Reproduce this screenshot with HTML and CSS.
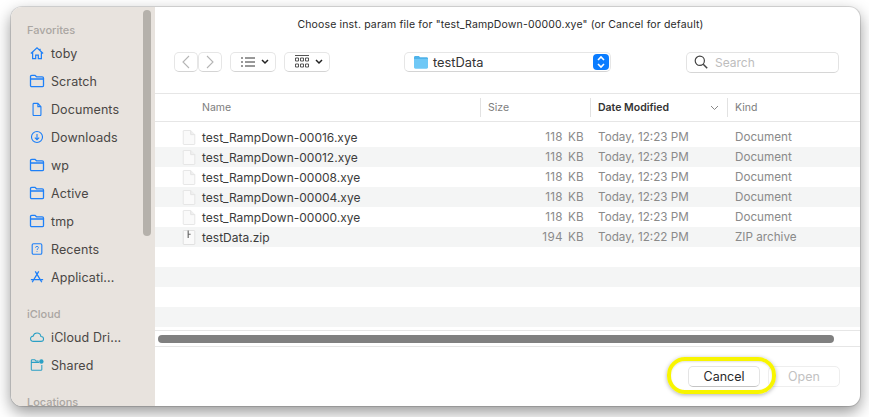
FILE: index.html
```html
<!DOCTYPE html>
<html lang="en">
<head>
  <meta charset="UTF-8" />
  <title>Choose inst. param file</title>
  <link rel="stylesheet" href="styles.css">
</head>
<body>
  <svg class="defs" width="0" height="0">
    <symbol id="folder" viewBox="0 0 16 14"><path d="M1.500 3.500V2.600c0-.8.5-1.300 1.300-1.300h3.200l1.500 1.500h5.700c.9 0 1.300.5 1.300 1.300v7.300c0 .8-.5 1.300-1.300 1.300H2.800c-.8 0-1.300-.5-1.300-1.300zM1.500 5h13" fill="none" stroke="currentColor" stroke-width="1.300"/></symbol>
    <symbol id="doc" viewBox="0 0 17 20"><path d="M2.500 1.500c-.8 0-1 .4-1 1v15c0 .7.300 1 1 1h12c.7 0 1-.3 1-1V6.500l-5-5z" fill="#fafafa" stroke="#e2e2e2"/><path d="M10.500 1.500v5h5" fill="#f0f0f0" stroke="#e2e2e2"/></symbol>
  </svg>

  <div class="window">
    <aside class="sidebar">
      <div class="side-title first">Favorites</div>
      <div class="side-item"><svg class="ic" viewBox="0 0 16 16"><path d="M1 8.500 8 2l7 6.500M3 7v7.500h3.500v-4h3v4H13V7M11.500 3V5" fill="none" stroke="currentColor" stroke-width="1.400"/></svg>toby</div>
      <div class="side-item"><svg class="ic"><use href="#folder"/></svg>Scratch</div>
      <div class="side-item"><svg class="ic" viewBox="0 0 16 16"><path d="M3.500 2.500c0-.7.400-1 1-1h4.500l3.500 3.800v9c0 .7-.4 1.200-1 1.200h-7c-.6 0-1-.5-1-1.200zM9 1.500v3.800h3.500" fill="none" stroke="currentColor" stroke-width="1.300"/></svg>Documents</div>
      <div class="side-item"><svg class="ic" viewBox="0 0 16 16"><circle cx="8" cy="8" r="6.300" fill="none" stroke="currentColor" stroke-width="1.300"/><path d="M8 4.500v6.500M5.500 8.700 8 11l2.500-2.300" fill="none" stroke="currentColor" stroke-width="1.300"/></svg>Downloads</div>
      <div class="side-item"><svg class="ic"><use href="#folder"/></svg>wp</div>
      <div class="side-item"><svg class="ic"><use href="#folder"/></svg>Active</div>
      <div class="side-item"><svg class="ic"><use href="#folder"/></svg>tmp</div>
      <div class="side-item"><svg class="ic" viewBox="0 0 16 16"><rect x="2.500" y="2" width="11" height="12" rx="1.500" fill="none" stroke="currentColor" stroke-width="1.300"/><path d="M6.300 6.500C6.300 5.500 7 5 8 5s1.700.6 1.700 1.400C9.700 7.700 8 7.700 8 9.200M8 10.300v1" fill="none" stroke="currentColor"/></svg>Recents</div>
      <div class="side-item"><svg class="ic" viewBox="0 0 16 16"><path d="M6 1.500 13.500 14M10 1.500 2.500 14M1 11h14M11.500 11l1.500 2" fill="none" stroke="currentColor" stroke-width="1.500"/></svg>Applicati...</div>
      <div class="side-title">iCloud</div>
      <div class="side-item teal"><svg class="ic" viewBox="0 0 16 16"><path d="M4 13c-2 0-3.400-1.300-3.400-3S2 7 3.600 7C4.200 4.800 6 3.500 8 3.500c2.500 0 4.200 1.700 4.500 4 1.700 0 3 1.200 3 2.800S14 13 12.500 13z" fill="none" stroke="currentColor" stroke-width="1.200"/></svg>iCloud Dri...</div>
      <div class="side-item teal"><svg class="ic" viewBox="0 0 16 16"><path d="M1.500 5V3.200c0-.7.400-1.100 1-1.100h3l1.300 1.400h3M1.500 5h9M1.500 5v8c0 .7.400 1 1 1h10c.6 0 1-.3 1-1V8" fill="none" stroke="currentColor" stroke-width="1.200"/><circle cx="13" cy="4" r="2.500" fill="currentColor"/></svg>Shared</div>
      <div class="side-title last">Locations</div>
      <div class="side-thumb"></div>
    </aside>

    <main class="main">
      <div class="dialog-title">Choose inst. param file for "test_RampDown-00000.xye" (or Cancel for default)</div>

      <div class="toolbar">
        <div class="btn btn-nav">
          <svg width="10" height="14" viewBox="0 0 10 14"><path d="M8 1 2 7l6 6" fill="none" stroke="#b5b5b5" stroke-width="1.100"/></svg>
        </div>
        <div class="btn btn-nav">
          <svg width="10" height="14" viewBox="0 0 10 14"><path d="m2 1 6 6-6 6" fill="none" stroke="#b5b5b5" stroke-width="1.100"/></svg>
        </div>
        <div class="btn btn-view">
          <svg width="14" height="10" viewBox="0 0 14 10"><path d="M0 1h2M4 1h10M0 5h2M4 5h10M0 9h2M4 9h10" stroke="#333" stroke-width="1"/></svg>
          <svg class="chev" width="8" height="6" viewBox="0 0 8 6"><path d="m1 1 3 3 3-3" fill="none" stroke="#222" stroke-width="1.500"/></svg>
        </div>
        <div class="btn btn-view">
          <svg width="14" height="14" viewBox="0 0 14 14"><path d="M0 .5h14" stroke="#555"/><path d="M.5 3h3v3h-3zM5.500 3h3v3h-3zM10.500 3h3v3h-3zM.5 9h3v3h-3zM5.500 9h3v3h-3zM10.500 9h3v3h-3z" fill="none" stroke="#444" stroke-width=".9"/></svg>
          <svg class="chev" width="8" height="6" viewBox="0 0 8 6"><path d="m1 1 3 3 3-3" fill="none" stroke="#222" stroke-width="1.500"/></svg>
        </div>
        <div class="btn btn-path">
          <svg width="16" height="14" viewBox="0 0 16 14"><path d="M1 2.500C1 1.500 1.500 1 2.500 1h3.300l1.400 1.300h6.300c1 0 1.500.5 1.500 1.500V5H1z" fill="#4fb3ea"/><path d="M1 4h14v8.300c0 .9-.5 1.400-1.500 1.400h-11c-1 0-1.500-.5-1.500-1.400z" fill="#6fc8f6"/></svg>
          <span class="path-name">testData</span>
          <span class="stepper"><svg width="10" height="14" viewBox="0 0 10 14"><path d="m2 5 3-3 3 3M2 9l3 3 3-3" fill="none" stroke="#fff" stroke-width="1.600"/></svg></span>
        </div>
        <div class="search">
          <svg width="14" height="14" viewBox="0 0 14 14"><circle cx="5.800" cy="5.800" r="4.600" fill="none" stroke="#444" stroke-width="1.200"/><path d="m9.200 9.200 4 4" stroke="#444" stroke-width="1.500"/></svg>
          <span>Search</span>
        </div>
      </div>

      <div class="list-head row-grid">
        <div class="col">Name</div>
        <div class="col sep">Size</div>
        <div class="col sep sorted">Date Modified<svg width="9" height="6" viewBox="0 0 9 6"><path d="m1 1 3.500 3.500L8 1" fill="none" stroke="#888"/></svg></div>
        <div class="col sep">Kind</div>
      </div>

      <div class="list">
        <div class="row row-grid"><svg class="file"><use href="#doc"/></svg><div>test_RampDown-00016.xye</div><div class="dim num">118 KB</div><div class="dim">Today, 12:23 PM</div><div class="dim">Document</div></div>
        <div class="row row-grid"><svg class="file"><use href="#doc"/></svg><div>test_RampDown-00012.xye</div><div class="dim num">118 KB</div><div class="dim">Today, 12:23 PM</div><div class="dim">Document</div></div>
        <div class="row row-grid"><svg class="file"><use href="#doc"/></svg><div>test_RampDown-00008.xye</div><div class="dim num">118 KB</div><div class="dim">Today, 12:23 PM</div><div class="dim">Document</div></div>
        <div class="row row-grid"><svg class="file"><use href="#doc"/></svg><div>test_RampDown-00004.xye</div><div class="dim num">118 KB</div><div class="dim">Today, 12:23 PM</div><div class="dim">Document</div></div>
        <div class="row row-grid"><svg class="file"><use href="#doc"/></svg><div>test_RampDown-00000.xye</div><div class="dim num">118 KB</div><div class="dim">Today, 12:23 PM</div><div class="dim">Document</div></div>
        <div class="row row-grid"><svg class="file" viewBox="0 0 17 20"><path d="M2.500 1.500c-.8 0-1 .4-1 1v15c0 .7.300 1 1 1h12c.7 0 1-.3 1-1V2.500c0-.6-.3-1-1-1z" fill="#fafafa" stroke="#dcdcdc"/><path d="M7.500 1.500v9M7.500 6h3" stroke="#666" stroke-width="1.400"/></svg><div>testData.zip</div><div class="dim num">194 KB</div><div class="dim">Today, 12:22 PM</div><div class="dim">ZIP archive</div></div>
        <div class="row"></div>
        <div class="row"></div>
        <div class="row"></div>
        <div class="row"></div>
      </div>

      <div class="hscroll"><div class="hthumb"></div></div>

      <div class="footer">
        <div class="action cancel">Cancel</div>
        <div class="action open">Open</div>
      </div>
      <div class="highlight"></div>
    </main>
  </div>
</body>
</html>
```

FILE: styles.css
```css
* { box-sizing: border-box; margin: 0; padding: 0; }
html, body { height: 100%; overflow: hidden; }
body {
  background-color: #fff;
  font-family: Inter, 'Noto Sans', sans-serif;
  color: #333;
  padding: 7px 9px 11px 11px;
}
.defs { position: absolute; }

.window {
  display: flex;
  width: 849px;
  height: 399px;
  border-radius: 11px;
  overflow: hidden;
  box-shadow: 0 0 0 1px rgba(0, 0, 0, .12), 0 6px 16px rgba(0, 0, 0, .42);
  background: #fff;
}

.sidebar {
  position: relative;
  width: 144px;
  flex: none;
  background-color: #e8e3de;
  padding-top: 16px;
  overflow: hidden;
}
.side-title {
  height: 15px;
  line-height: 15px;
  margin: 16px 0 1px 16px;
  font-size: 11px;
  font-weight: 500;
  color: #aaa6a2;
}
.side-title.first { margin-top: 0; }
.side-item {
  display: flex;
  align-items: center;
  height: 28px;
  padding-left: 18px;
  font-size: 12.5px;
  color: #4a4745;
  letter-spacing: .1px;
}
.ic {
  width: 16px;
  height: 14px;
  margin-right: 6px;
  color: #1e80f8;
  flex: none;
}
.teal .ic { color: #2ba0c5; }
.side-thumb {
  position: absolute;
  left: 132px;
  top: 3px;
  width: 8px;
  height: 226px;
  border-radius: 4px;
  background-color: #b5b1ab;
}

.main {
  position: relative;
  flex: 1;
  min-width: 0;
}
.dialog-title {
  height: 35px;
  padding: 10px 14px 0 0;
  line-height: 15px;
  font-size: 10.5px;
  text-align: center;
  color: #2a2a2a;
  letter-spacing: .15px;
}

.toolbar {
  display: flex;
  align-items: center;
  height: 51px;
  padding: 10px 21px 21px 19px;
}
.btn {
  display: flex;
  align-items: center;
  height: 20px;
  background: #fff;
  border: 1px solid #e6e6e6;
  border-bottom-color: #d4d4d4;
  border-radius: 5px;
}
.btn-nav { width: 24px; justify-content: center; }
.btn-view { width: 46px; margin-left: 8px; padding-left: 10px; }
.chev { margin-left: 6px; }
.btn-path {
  width: 207px;
  margin-left: 74px;
  padding-left: 8px;
  position: relative;
}
.path-name {
  margin-left: 4px;
  font-size: 12.8px;
  color: #333;
}
.stepper {
  position: absolute;
  right: 1px;
  top: 1px;
  width: 16px;
  height: 16px;
  border-radius: 4px;
  background-color: #0a7cff;
  display: flex;
  align-items: center;
  justify-content: center;
}
.search {
  display: flex;
  align-items: center;
  width: 153px;
  height: 21px;
  margin-left: 75px;
  padding-left: 7px;
  border: 1px solid #e3e3e3;
  border-bottom-color: #d6d6d6;
  border-radius: 5px;
  font-size: 12px;
  color: #bdbdbd;
}
.search span { margin-left: 7px; }

.row-grid {
  display: grid;
  grid-template-columns: 47px 278px 110px 137px 1fr;
  align-items: center;
}
.list-head {
  height: 29px;
  border-top: 1px solid #e6e6e6;
  border-bottom: 1px solid #e6e6e6;
  font-size: 10.5px;
  color: #7d7d7d;
  grid-template-columns: 325px 110px 137px 1fr;
}
.col {
  display: flex;
  align-items: center;
  justify-content: space-between;
  height: 19px;
  padding-left: 47px;
}
.col.sep {
  padding-left: 7px;
  border-left: 1px solid #e2e2e2;
}
.sorted {
  font-weight: 600;
  color: #333;
  padding-right: 8px;
}

.list { padding-top: 5px; }
.row {
  height: 20px;
  font-size: 12px;
  color: #3c3c3c;
}
.row:nth-child(even) { background-color: #f4f5f5; }
.file {
  width: 14px;
  height: 17px;
  margin-left: 27px;
}
.dim { color: #8a8a8a; font-size: 11.7px; padding-left: 8px; }
.num {
  text-align: right;
  padding: 0 6px 0 0;
  letter-spacing: .3px;
  word-spacing: 1.500px;
}

.hscroll {
  height: 17px;
  margin-top: 3px;
  padding: 4px 26px 0 3px;
  border-top: 1px solid #e6e6e6;
  border-bottom: 1px solid #e6e6e6;
}
.hthumb {
  height: 8px;
  border-radius: 4px;
  background-color: #808080;
}

.footer {
  display: flex;
  justify-content: flex-end;
  gap: 8px;
  padding: 19px 20px 0 0;
}
.action {
  width: 72px;
  height: 21px;
  line-height: 20px;
  text-align: center;
  font-size: 12.500px;
  background: #fff;
  border-radius: 5px;
}
.cancel {
  color: #2a2a2a;
  border: 1px solid #e4e4e4;
  border-bottom-color: #c4c4c4;
}
.open {
  color: #c2c2c2;
  border: 1px solid #eee;
}
.highlight {
  position: absolute;
  left: 512px;
  top: 350px;
  width: 109px;
  height: 37px;
  border: 4px solid #f8f500;
  border-radius: 18px;
  box-shadow: 0 1px 4px rgba(0, 0, 0, .3), inset 0 1px 2px rgba(0, 0, 0, .12);
}
```
